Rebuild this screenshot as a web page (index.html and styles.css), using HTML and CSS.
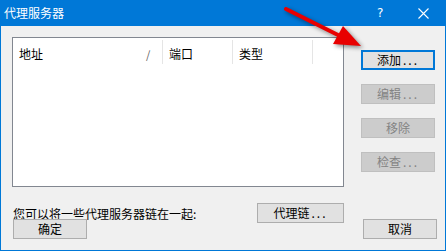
FILE: index.html
```html
<!DOCTYPE html>
<html lang="zh-CN">
<head>
    <meta charset="UTF-8">
    <title>代理服务器</title>
    <link rel="stylesheet" href="styles.css">
</head>
<body>

<div class="window">
    <div class="titlebar">
        <span class="title">代理服务器</span>
        <span class="help">?</span>
        <svg class="close" width="11" height="11" viewBox="0 0 11 11">
            <path d="M0.5 0.5 L10.5 10.5 M10.5 0.5 L0.5 10.5" stroke="#fff" stroke-width="1.1"/>
        </svg>
    </div>

    <div class="content">
        <div class="main-row">
            <div class="listview">
                <div class="header">
                    <div class="col col-addr">地址<span class="sort">/</span></div>
                    <div class="col col-port">端口</div>
                    <div class="col col-type">类型</div>
                </div>
            </div>
            <div class="side-buttons">
                <button class="btn focused">添加<span class="dots">...</span></button>
                <button class="btn" disabled>编辑<span class="dots">...</span></button>
                <button class="btn" disabled>移除</button>
                <button class="btn" disabled>检查<span class="dots">...</span></button>
            </div>
        </div>

        <div class="chain-row">
            <span class="chain-label">您可以将一些代理服务器链在一起:</span>
            <button class="btn chain-btn">代理链<span class="dots">...</span></button>
        </div>

        <div class="footer">
            <button class="btn">确定</button>
            <button class="btn">取消</button>
        </div>
    </div>

    <!-- annotation arrow drawn over the dialog -->
    <svg class="arrow" width="446" height="251" viewBox="0 0 446 251">
        <line x1="286" y1="9" x2="340" y2="36" stroke="#e80000" stroke-width="4" stroke-linecap="round"/>
        <polygon points="361,46 333,44 343,26" fill="#e80000"/>
    </svg>
</div>

</body>
</html>
```

FILE: styles.css
```css
body {
    margin: 0;
    background-color: #f0f0f0;
    font-family: "Noto Sans CJK SC", "Liberation Sans", sans-serif;
    font-size: 12px;
    color: #000;
}
.window {
    position: relative;
    width: 446px;
    height: 251px;
    box-sizing: border-box;
    border: 1px solid #0078d7;
    border-top: none;
    background-color: #f0f0f0;
    overflow: hidden;
}
.titlebar {
    height: 26px;
    background-color: #0078d7;
    color: #fff;
    display: flex;
    align-items: center;
    margin: 0 -1px;
    padding-left: 4px;
}
.title {
    flex: 1;
    font-size: 12px;
    line-height: 26px;
}
.help {
    font-family: "DejaVu Sans", sans-serif;
    font-size: 12px;
    width: 12px;
    margin-right: 29px;
}
.close {
    margin-right: 17px;
}
.content {
    padding: 11px 0 0 11px;
}
.main-row {
    display: flex;
}
.listview {
    width: 332px;
    height: 150px;
    box-sizing: border-box;
    border: 1px solid #828790;
    background-color: #fff;
}
.header {
    display: flex;
    height: 26px;
    padding-top: 1px;
}
.col {
    position: relative;
    box-sizing: border-box;
    height: 24px;
    margin-top: 1px;
    padding: 4px 0 0 6px;
    line-height: 20px;
    border-right: 1px solid #e5e5e5;
}
.col-addr {
    width: 150px;
}
.col-port {
    width: 70px;
}
.col-type {
    width: 80px;
}
.sort {
    position: absolute;
    left: 133px;
    top: 4px;
    color: #606060;
    font-size: 11px;
}
.side-buttons {
    display: flex;
    flex-direction: column;
    gap: 14px;
    margin-left: 17px;
    padding-top: 13px;
}
.btn {
    width: 74px;
    height: 20px;
    box-sizing: border-box;
    padding: 0;
    background-color: #e1e1e1;
    border: 1px solid #adadad;
    font-family: inherit;
    font-size: 12px;
    line-height: 16px;
    color: #000;
}
.btn.focused {
    border: 2px solid #0078d7;
}
.btn:disabled {
    background-color: #cccccc;
    border-color: #bfbfbf;
    color: #838383;
}
.dots {
    letter-spacing: 2px;
    margin-left: 2px;
}
.chain-row {
    display: flex;
    align-items: center;
    margin-top: 16px;
    padding-left: 1px;
}
.chain-label {
    width: 244px;
}
.chain-btn {
    width: 87px;
}
.footer {
    display: flex;
    justify-content: space-between;
    margin-top: -4px;
    padding-left: 1px;
    width: 424px;
}
.arrow {
    position: absolute;
    left: -1px;
    top: 0;
    pointer-events: none;
    filter: drop-shadow(2px 2px 2px rgba(0, 0, 0, 0.45));
}
```
